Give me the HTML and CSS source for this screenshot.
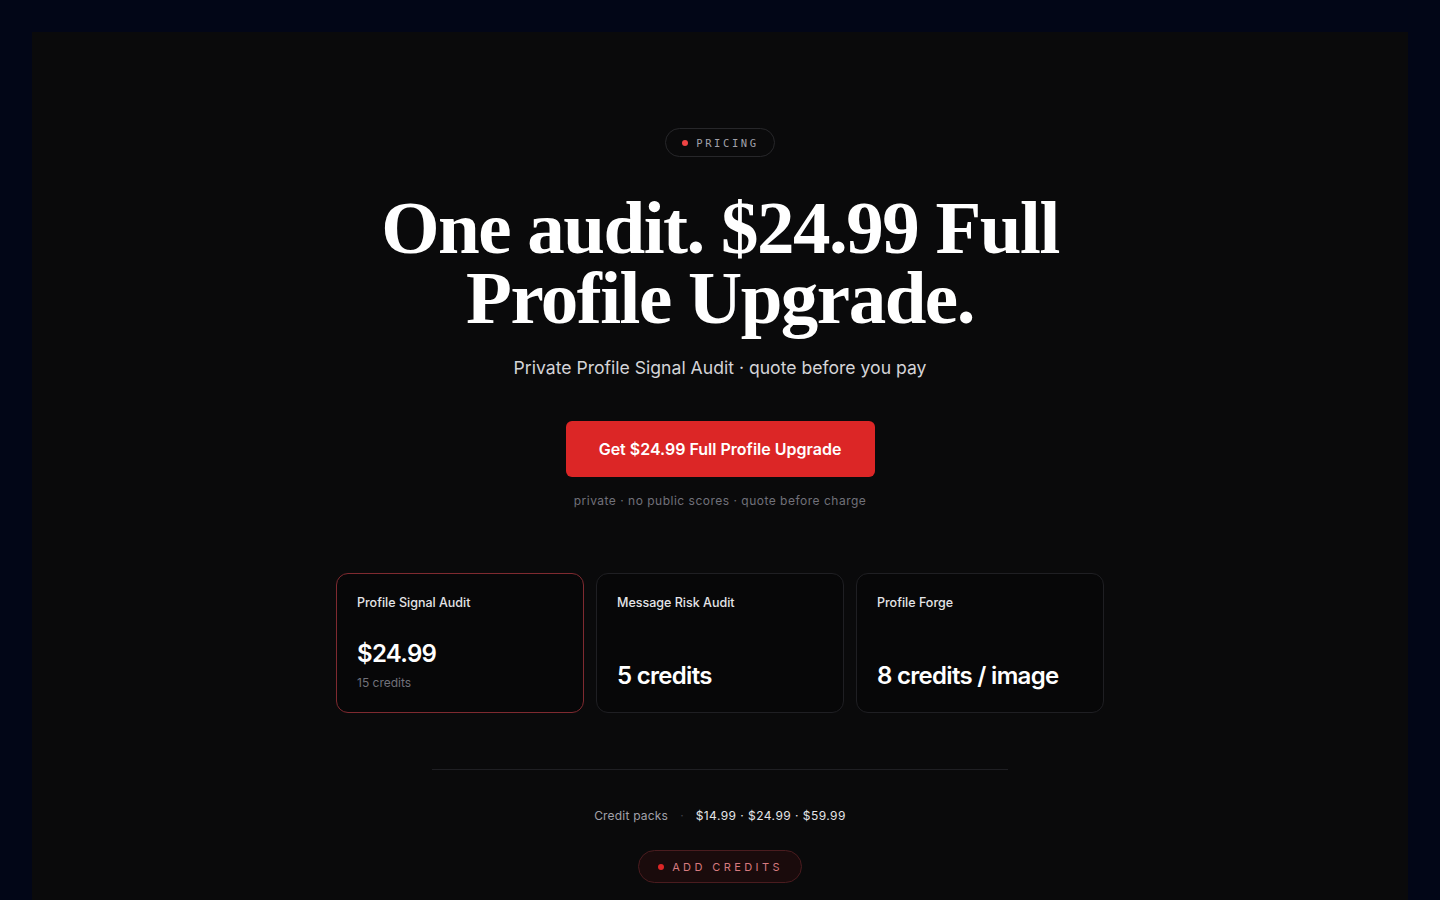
FILE: index.html
```html
<!DOCTYPE html>
<html lang="en">
<head>
<meta charset="utf-8">
<title>Pricing</title>
<link rel="stylesheet" href="styles.css">
</head>
<body>
<div class="frame">
  <main class="panel">
    <div class="badge"><span class="dot"></span>PRICING</div>
    <h1 class="title">One audit. $24.99 Full<br>Profile Upgrade.</h1>
    <p class="subtitle">Private Profile Signal Audit · quote before you pay</p>
    <a class="cta" href="#">Get $24.99 Full Profile Upgrade</a>
    <p class="fine">private · no public scores · quote before charge</p>

    <section class="cards">
      <div class="card card-active">
        <div class="card-title">Profile Signal Audit</div>
        <div class="card-bottom">
          <div class="card-value">$24.99</div>
          <div class="card-note">15 credits</div>
        </div>
      </div>
      <div class="card">
        <div class="card-title">Message Risk Audit</div>
        <div class="card-bottom">
          <div class="card-value">5 credits</div>
        </div>
      </div>
      <div class="card">
        <div class="card-title">Profile Forge</div>
        <div class="card-bottom">
          <div class="card-value">8 credits / image</div>
        </div>
      </div>
    </section>

    <hr class="divider">

    <div class="packs">
      <span class="packs-label">Credit packs</span>
      <span class="packs-sep">·</span>
      <span class="packs-prices">$14.99 · $24.99 · $59.99</span>
    </div>

    <a class="add" href="#"><span class="dot"></span>ADD CREDITS</a>
  </main>
</div>
</body>
</html>
```
FILE: styles.css
```css
* { box-sizing: border-box; }
html, body { margin: 0; padding: 0; }
body {
  background: #020617;
  font-family: Inter, "Noto Sans", sans-serif;
  color: #fafafa;
  height: 900px;
  overflow: hidden;
}
.frame {
  padding: 32px 32px 0 32px;
}
.panel {
  background: #0a0a0b;
  min-height: 868px;
  display: flex;
  flex-direction: column;
  align-items: center;
  padding-top: 96px;
}
.badge {
  display: flex;
  align-items: center;
  gap: 8px;
  height: 29px;
  padding: 0 15px 0 16px;
  border: 1px solid #27272a;
  border-radius: 999px;
  font-family: "DejaVu Sans Mono", "Liberation Mono", monospace;
  font-size: 10.5px;
  letter-spacing: 2.6px;
  color: #a1a1aa;
}
.dot {
  width: 6px;
  height: 6px;
  border-radius: 50%;
  background: #ef4444;
  display: inline-block;
}
.title {
  margin: 36px 0 0 0;
  font-family: "Liberation Serif", "DejaVu Serif", serif;
  font-weight: 700;
  font-size: 75px;
  line-height: 70px;
  letter-spacing: -1.5px;
  text-align: center;
  color: #ffffff;
}
.subtitle {
  margin: 22px 0 0 0;
  font-size: 17.6px;
  line-height: 26px;
  color: #d4d4d8;
}
.cta {
  margin-top: 40px;
  display: flex;
  align-items: center;
  justify-content: center;
  width: 309px;
  height: 56px;
  background: #dc2626;
  border-radius: 6px;
  color: #ffffff;
  text-decoration: none;
  font-weight: 600;
  font-size: 16px;
}
.fine {
  margin: 16px 0 0 0;
  font-size: 12px;
  line-height: 16px;
  letter-spacing: 0.5px;
  color: #71717a;
}
.cards {
  margin-top: 64px;
  display: grid;
  grid-template-columns: repeat(3, 248px);
  gap: 12px;
}
.card {
  height: 140px;
  border: 1px solid #1f1f23;
  border-radius: 12px;
  background: #070708;
  padding: 21px 20px 22px 20px;
  display: flex;
  flex-direction: column;
  justify-content: space-between;
}
.card-active {
  border-color: #7f2a30;
}
.card-title {
  font-size: 12.5px;
  line-height: 16px;
  font-weight: 500;
  color: #e4e4e7;
}
.card-value {
  font-size: 24px;
  line-height: 28px;
  font-weight: 600;
  letter-spacing: -0.7px;
  color: #ffffff;
}
.card-note {
  margin-top: 7px;
  font-size: 12px;
  line-height: 15px;
  color: #71717a;
}
.divider {
  margin: 56px 0 0 0;
  width: 576px;
  border: 0;
  border-top: 1px solid #1f1f23;
  height: 0;
}
.packs {
  margin-top: 38px;
  display: flex;
  align-items: center;
  gap: 12px;
  font-size: 12px;
  line-height: 16px;
}
.packs-label { color: #a1a1aa; letter-spacing: 0.2px; }
.packs-sep { color: #3f3f46; }
.packs-prices { color: #e4e4e7; letter-spacing: 0.45px; }
.add {
  margin-top: 26px;
  display: flex;
  align-items: center;
  gap: 8px;
  height: 33px;
  padding: 0 18px 0 19px;
  border: 1px solid #4a1c1f;
  background: #1a0b0c;
  border-radius: 999px;
  color: #d77a7f;
  text-decoration: none;
  font-size: 11px;
  letter-spacing: 3.4px;
  font-weight: 400;
}
.add .dot { background: #dc2626; }
```
